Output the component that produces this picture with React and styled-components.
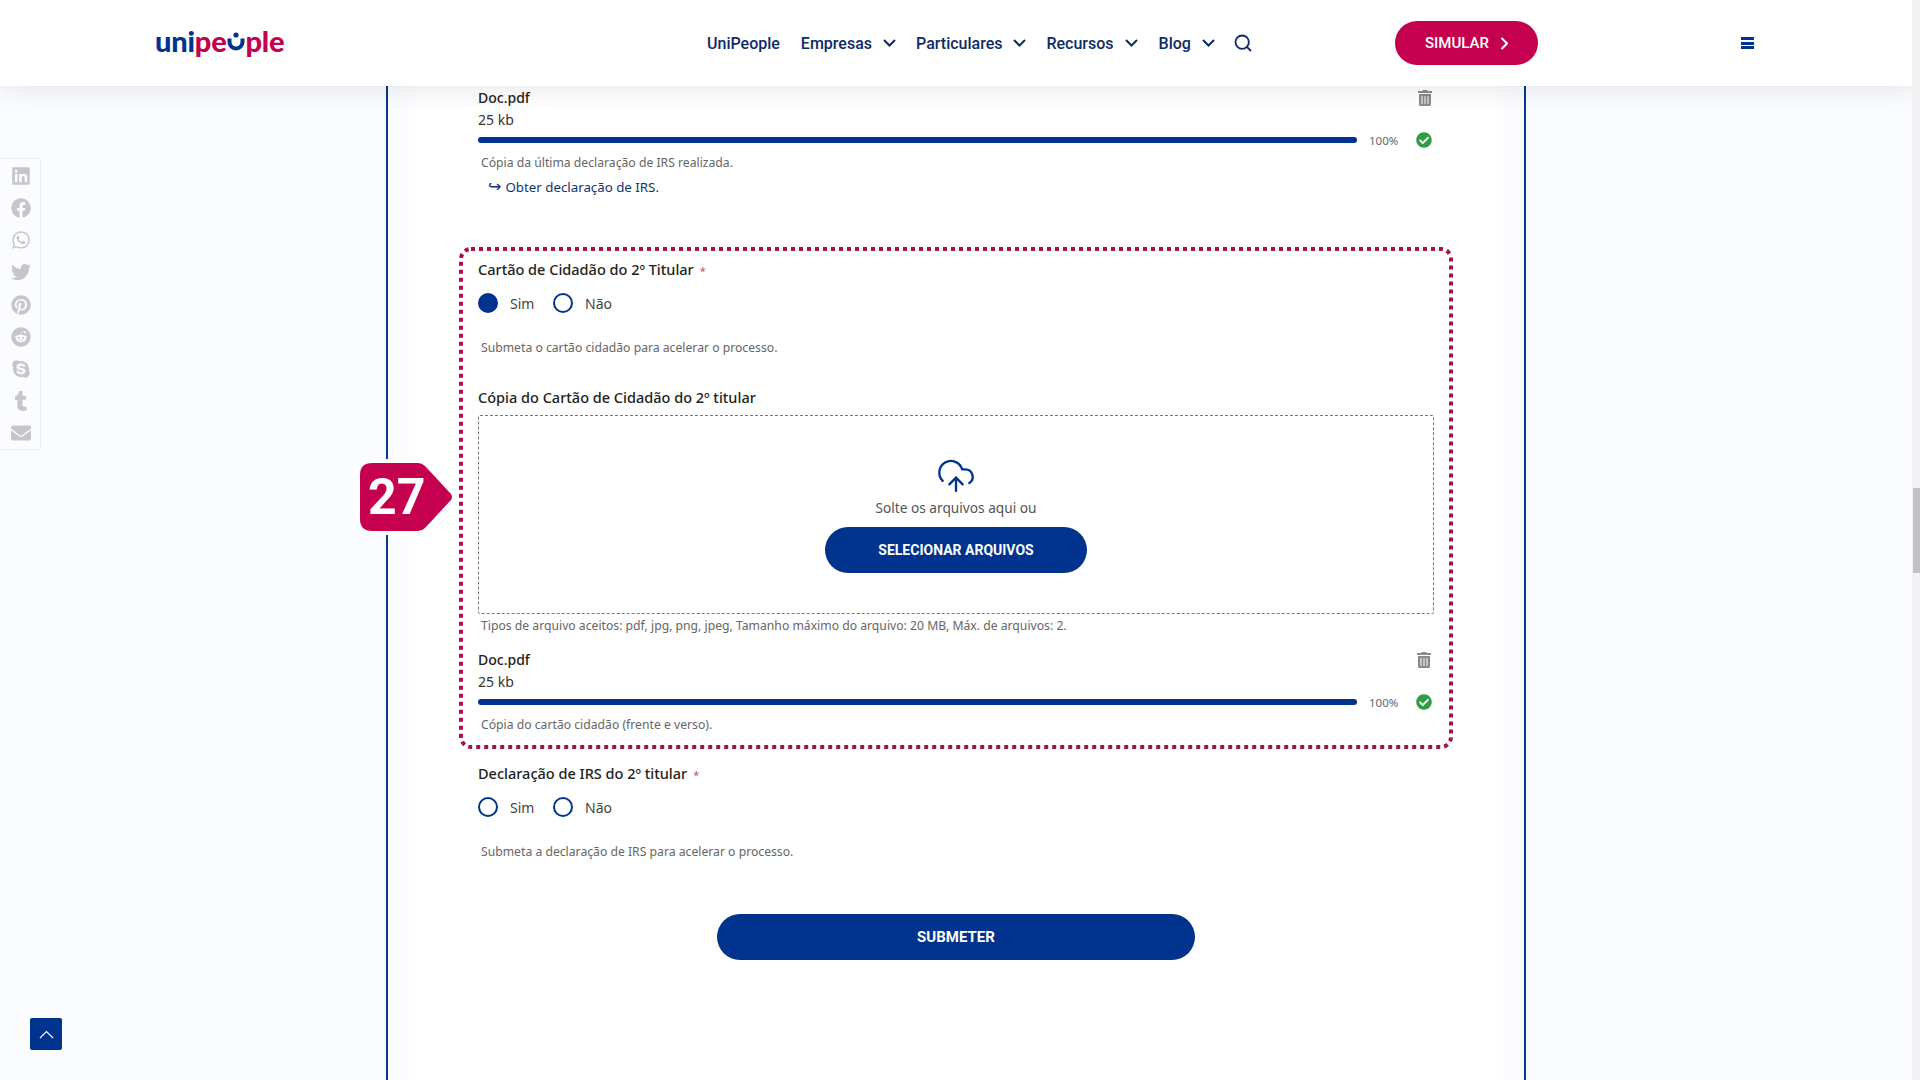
import React from "react";
import styled, { createGlobalStyle } from "styled-components";
import { CloudUpload, Search } from "lucide-react";
import {
	FaLinkedin,
	FaFacebook,
	FaWhatsapp,
	FaTwitter,
	FaPinterest,
	FaReddit,
	FaSkype,
	FaTumblr,
	FaEnvelope,
	FaTrashAlt,
	FaCheckCircle,
} from "react-icons/fa";

const NAVY = "#00338d";
const CRIMSON = "#c4004f";

const GlobalStyle = createGlobalStyle`
	html, body {
		margin: 0;
		height: 100%;
		overflow: hidden;
		background: #fbfcff;
		font-family: "Noto Sans", sans-serif;
	}
	* {
		box-sizing: border-box;
	}
`;

const Page = styled.div`
	height: 1080px;
	overflow: hidden;
	display: flex;
	flex-direction: column;
`;

const Header = styled.header`
	position: relative;
	z-index: 5;
	flex: 0 0 86px;
	display: flex;
	align-items: center;
	padding-left: 155px;
	background: #fff;
	box-shadow: 0 2px 30px rgba(0, 0, 0, 0.1);
	font-family: Roboto, sans-serif;
`;

const Logo = styled.a`
	display: flex;
	align-items: center;
	width: 130px;
	margin-top: -4px;
	font-family: Lato, sans-serif;
	font-weight: 900;
	font-size: 29px;
	line-height: 30px;
	letter-spacing: -0.2px;
	color: ${CRIMSON};
`;

const LogoNavy = styled.span`
	color: ${NAVY};
`;

const LogoSmile = styled.svg`
	width: 18px;
	height: 24px;
	margin: 0 0.5px;
`;

const Nav = styled.nav`
	margin-left: 422px;
	display: flex;
	align-items: center;
`;

const NavItem = styled.a`
	display: flex;
	align-items: center;
	gap: 11px;
	margin-right: ${(p) => p.$gap}px;
	font-size: 16px;
	font-weight: 500;
	color: #0d2b66;
	white-space: nowrap;
`;

const Simular = styled.a`
	margin-left: 142px;
	width: 143px;
	height: 44px;
	display: flex;
	align-items: center;
	justify-content: center;
	gap: 11px;
	border-radius: 22px;
	background: ${CRIMSON};
	color: #fff;
	font-size: 15px;
	font-weight: 500;
`;

const Burger = styled.a`
	margin-left: 203px;
	width: 13px;
	height: 12px;
	display: flex;
	flex-direction: column;
	justify-content: space-between;
	span {
		height: 3px;
		background: ${NAVY};
	}
`;

const Frame = styled.main`
	flex: 1;
	width: 1140px;
	margin-left: 386px;
	border-left: 2px solid ${NAVY};
	border-right: 2px solid ${NAVY};
	padding: 0 28px;
`;

const Panel = styled.div`
	height: 100%;
	padding: 1px 43px 0 43px;
	width: 1080px;
	background: #fff;
	box-shadow: 0 0 26px 4px #fff;
`;

const Section = styled.section`
	margin-left: 19px;
	width: 957px;
`;

const FileHead = styled.div`
	display: flex;
	justify-content: space-between;
	margin-top: ${(p) => p.$top || 0}px;
`;

const FileName = styled.div`
	font-size: 14px;
	line-height: 22px;
	font-weight: 500;
	color: #222;
`;

const FileSize = styled.div`
	font-size: 14px;
	line-height: 22px;
	color: #333;
`;

const IconSlot = styled.span`
	flex: 0 0 20px;
	display: flex;
	align-items: center;
	justify-content: center;
	color: ${(p) => p.$color};
	font-size: ${(p) => p.$size}px;
`;

const ProgressRow = styled.div`
	display: flex;
	align-items: center;
	height: 18px;
`;

const Track = styled.div`
	width: 879px;
	height: 6px;
	border-radius: 3px;
	background: ${NAVY};
`;

const Percent = styled.span`
	width: 57px;
	padding-left: 12px;
	font-size: 11.5px;
	color: #666;
`;

const Help = styled.p`
	margin: ${(p) => p.$top}px 0 0;
	padding-left: 3px;
	font-size: 12.2px;
	line-height: 20px;
	color: #666;
`;

const DocLink = styled.a`
	display: flex;
	gap: 4px;
	margin-top: 4px;
	padding-left: 10px;
	font-size: 13.3px;
	line-height: 20px;
	color: #14336e;
`;

const Hook = styled.span`
	font-family: "DejaVu Sans", sans-serif;
	font-size: 16px;
`;

const Highlight = styled.section`
	position: relative;
	margin: 50px 0 0 0;
	width: 994px;
	padding: 11px 19px 14px 19px;
`;

const DotFrame = styled.svg`
	position: absolute;
	inset: 0;
	width: 100%;
	height: 100%;
	pointer-events: none;
`;

const DotRect = styled.rect`
	x: 2px;
	y: 2px;
	width: calc(100% - 4px);
	height: calc(100% - 4px);
	rx: 10px;
	fill: none;
	stroke: #a80f50;
	stroke-width: 4;
	stroke-dasharray: 4 4;
`;

const Label = styled.div`
	margin-top: ${(p) => p.$top || 0}px;
	font-size: 14.5px;
	line-height: 22px;
	font-weight: 500;
	color: #222;
`;

const Req = styled.span`
	margin-left: 6px;
	font-size: 11px;
	color: #d9537f;
`;

const Radios = styled.div`
	display: flex;
	align-items: center;
	height: 24px;
	margin-top: ${(p) => p.$top}px;
	font-size: 14px;
	color: #444;
`;

const Radio = styled.span`
	width: 20px;
	height: 20px;
	border-radius: 50%;
	border: 2px solid ${NAVY};
	background: ${(p) => (p.$checked ? NAVY : "#fff")};
`;

const RadioText = styled.span`
	margin-left: 12px;
	width: 43px;
`;

const Drop = styled.div`
	margin-top: 7px;
	height: 199px;
	display: flex;
	flex-direction: column;
	align-items: center;
	padding-top: 40px;
	border: 1px dashed #777;
	border-radius: 2px;
	color: ${NAVY};
`;

const DropText = styled.div`
	margin-top: 2px;
	font-size: 13.7px;
	line-height: 20px;
	color: #555;
`;

const PillButton = styled.a`
	display: flex;
	align-items: center;
	justify-content: center;
	width: ${(p) => p.$width}px;
	height: ${(p) => p.$height}px;
	border-radius: ${(p) => p.$height / 2}px;
	background: ${NAVY};
	color: #fff;
	font-family: Roboto, sans-serif;
	font-weight: 700;
	font-size: ${(p) => p.$font}px;
	margin: ${(p) => p.$margin};
`;

const Share = styled.aside`
	position: fixed;
	left: 0;
	top: 158px;
	width: 41px;
	height: 292px;
	display: flex;
	flex-direction: column;
	align-items: center;
	justify-content: space-between;
	padding: 7px 0 6px 2px;
	background: #fbfcff;
	border: 1px solid #eff0f2;
	border-left: 0;
	border-radius: 0 4px 4px 0;
	color: #c6c6c6;
	font-size: 20px;
	svg {
		display: block;
	}
`;

const ToTop = styled.a`
	position: fixed;
	left: 30px;
	top: 1018px;
	width: 32px;
	height: 32px;
	display: flex;
	align-items: center;
	justify-content: center;
	border-radius: 2px;
	background: ${NAVY};
`;

const Scrollbar = styled.div`
	position: fixed;
	z-index: 6;
	right: 0;
	top: 0;
	bottom: 0;
	width: 8px;
	background: #f1f1f1;
`;

const Thumb = styled.div`
	position: absolute;
	top: 488px;
	left: 1px;
	width: 7px;
	height: 85px;
	background: #c1c1c1;
`;

const Badge = styled.div`
	position: absolute;
	left: -99px;
	top: 216px;
	width: 93px;
	height: 68px;
	display: flex;
	align-items: center;
	padding-left: 8px;
	color: #fff;
	font-family: Roboto, sans-serif;
	font-weight: 700;
	font-size: 50px;
	svg {
		position: absolute;
		inset: 0;
		overflow: visible;
	}
	span {
		position: relative;
	}
`;

const Chevron = ({ stroke = "#0d2b66" }) => (
	<svg width="13" height="8" viewBox="0 0 13 8" fill="none">
		<path d="M1 1 L6.5 6.5 L12 1" stroke={stroke} strokeWidth="2" />
	</svg>
);

const ChevronRight = () => (
	<svg width="8" height="13" viewBox="0 0 8 13" fill="none">
		<path d="M1.5 1 L7 6.5 L1.5 12" stroke="#fff" strokeWidth="2" />
	</svg>
);

const ChevronUp = () => (
	<svg width="15" height="9" viewBox="0 0 15 9" fill="none">
		<path d="M1 8 L7.5 1.5 L14 8" stroke="#fff" strokeWidth="1.2" />
	</svg>
);

const FileBlock = ({ top }) => (
	<>
		<FileHead $top={top}>
			<FileName>Doc.pdf</FileName>
			<IconSlot $color="#8a8a8a" $size={16}>
				<FaTrashAlt />
			</IconSlot>
		</FileHead>
		<FileSize>25 kb</FileSize>
		<ProgressRow>
			<Track />
			<Percent>100%</Percent>
			<IconSlot $color="#2f9e44" $size={16}>
				<FaCheckCircle />
			</IconSlot>
		</ProgressRow>
	</>
);

const RadioGroup = ({ checked, top }) => (
	<Radios $top={top}>
		<Radio $checked={checked} />
		<RadioText>Sim</RadioText>
		<Radio />
		<RadioText>Não</RadioText>
	</Radios>
);

const shareIcons = [
	FaLinkedin,
	FaFacebook,
	FaWhatsapp,
	FaTwitter,
	FaPinterest,
	FaReddit,
	FaSkype,
	FaTumblr,
	FaEnvelope,
];

export default function App() {
	return (
		<Page>
			<GlobalStyle />
			<Header>
				<Logo>
					<LogoNavy>uni</LogoNavy>pe
					<LogoSmile viewBox="0 0 18 24">
						<circle cx="9" cy="6" r="2.6" fill={NAVY} />
						<path
							d="M2.5 9.5 V13 a6.5 6.5 0 0 0 13 0 V9.5"
							fill="none"
							stroke={NAVY}
							strokeWidth="4"
						/>
					</LogoSmile>
					ple
				</Logo>
				<Nav>
					<NavItem $gap={21}>UniPeople</NavItem>
					<NavItem $gap={20}>
						Empresas <Chevron />
					</NavItem>
					<NavItem $gap={20}>
						Particulares <Chevron />
					</NavItem>
					<NavItem $gap={21}>
						Recursos <Chevron />
					</NavItem>
					<NavItem $gap={18}>
						Blog <Chevron />
					</NavItem>
					<NavItem $gap={0}>
						<Search size={20} strokeWidth={2.2} />
					</NavItem>
				</Nav>
				<Simular>
					SIMULAR <ChevronRight />
				</Simular>
				<Burger>
					<span />
					<span />
					<span />
				</Burger>
			</Header>

			<Frame>
				<Panel>
					<Section>
						<FileBlock />
						<Help $top={4}>Cópia da última declaração de IRS realizada.</Help>
						<DocLink>
							<Hook>↪</Hook> Obter declaração de IRS.
						</DocLink>
					</Section>

					<Highlight>
						<DotFrame>
							<DotRect />
						</DotFrame>
						<Badge>
							<svg width="93" height="68" viewBox="0 0 93 68">
								<path
									d="M12 0 H58 Q62 0 65 3 L91 31 Q93 34 91 37 L65 65 Q62 68 58 68 H12 Q0 68 0 56 V12 Q0 0 12 0 Z"
									fill={CRIMSON}
									stroke="#fff"
									strokeWidth="8"
									paintOrder="stroke"
								/>
							</svg>
							<span>27</span>
						</Badge>
						<Label>
							Cartão de Cidadão do 2º Titular<Req>*</Req>
						</Label>
						<RadioGroup checked top={9} />
						<Help $top={23}>Submeta o cartão cidadão para acelerar o processo.</Help>
						<Label $top={28}>Cópia do Cartão de Cidadão do 2º titular</Label>
						<Drop>
							<CloudUpload size={40} strokeWidth={1.4} />
							<DropText>Solte os arquivos aqui ou</DropText>
							<PillButton $width={262} $height={46} $font={14} $margin="9px 0 0">
								SELECIONAR ARQUIVOS
							</PillButton>
						</Drop>
						<Help $top={2}>
							Tipos de arquivo aceitos: pdf, jpg, png, jpeg, Tamanho máximo do arquivo: 20 MB, Máx. de
							arquivos: 2.
						</Help>
						<FileBlock top={13} />
						<Help $top={4}>Cópia do cartão cidadão (frente e verso).</Help>
					</Highlight>

					<Section>
						<Label $top={13}>
							Declaração de IRS do 2º titular<Req>*</Req>
						</Label>
						<RadioGroup top={9} />
						<Help $top={23}>Submeta a declaração de IRS para acelerar o processo.</Help>
						<PillButton $width={478} $height={46} $font={15} $margin="52px 0 0 239px">
							SUBMETER
						</PillButton>
					</Section>
				</Panel>
			</Frame>

			<Share>
				{shareIcons.map((Icon, i) => (
					<Icon key={i} />
				))}
			</Share>
			<ToTop>
				<ChevronUp />
			</ToTop>
			<Scrollbar>
				<Thumb />
			</Scrollbar>
		</Page>
	);
}
